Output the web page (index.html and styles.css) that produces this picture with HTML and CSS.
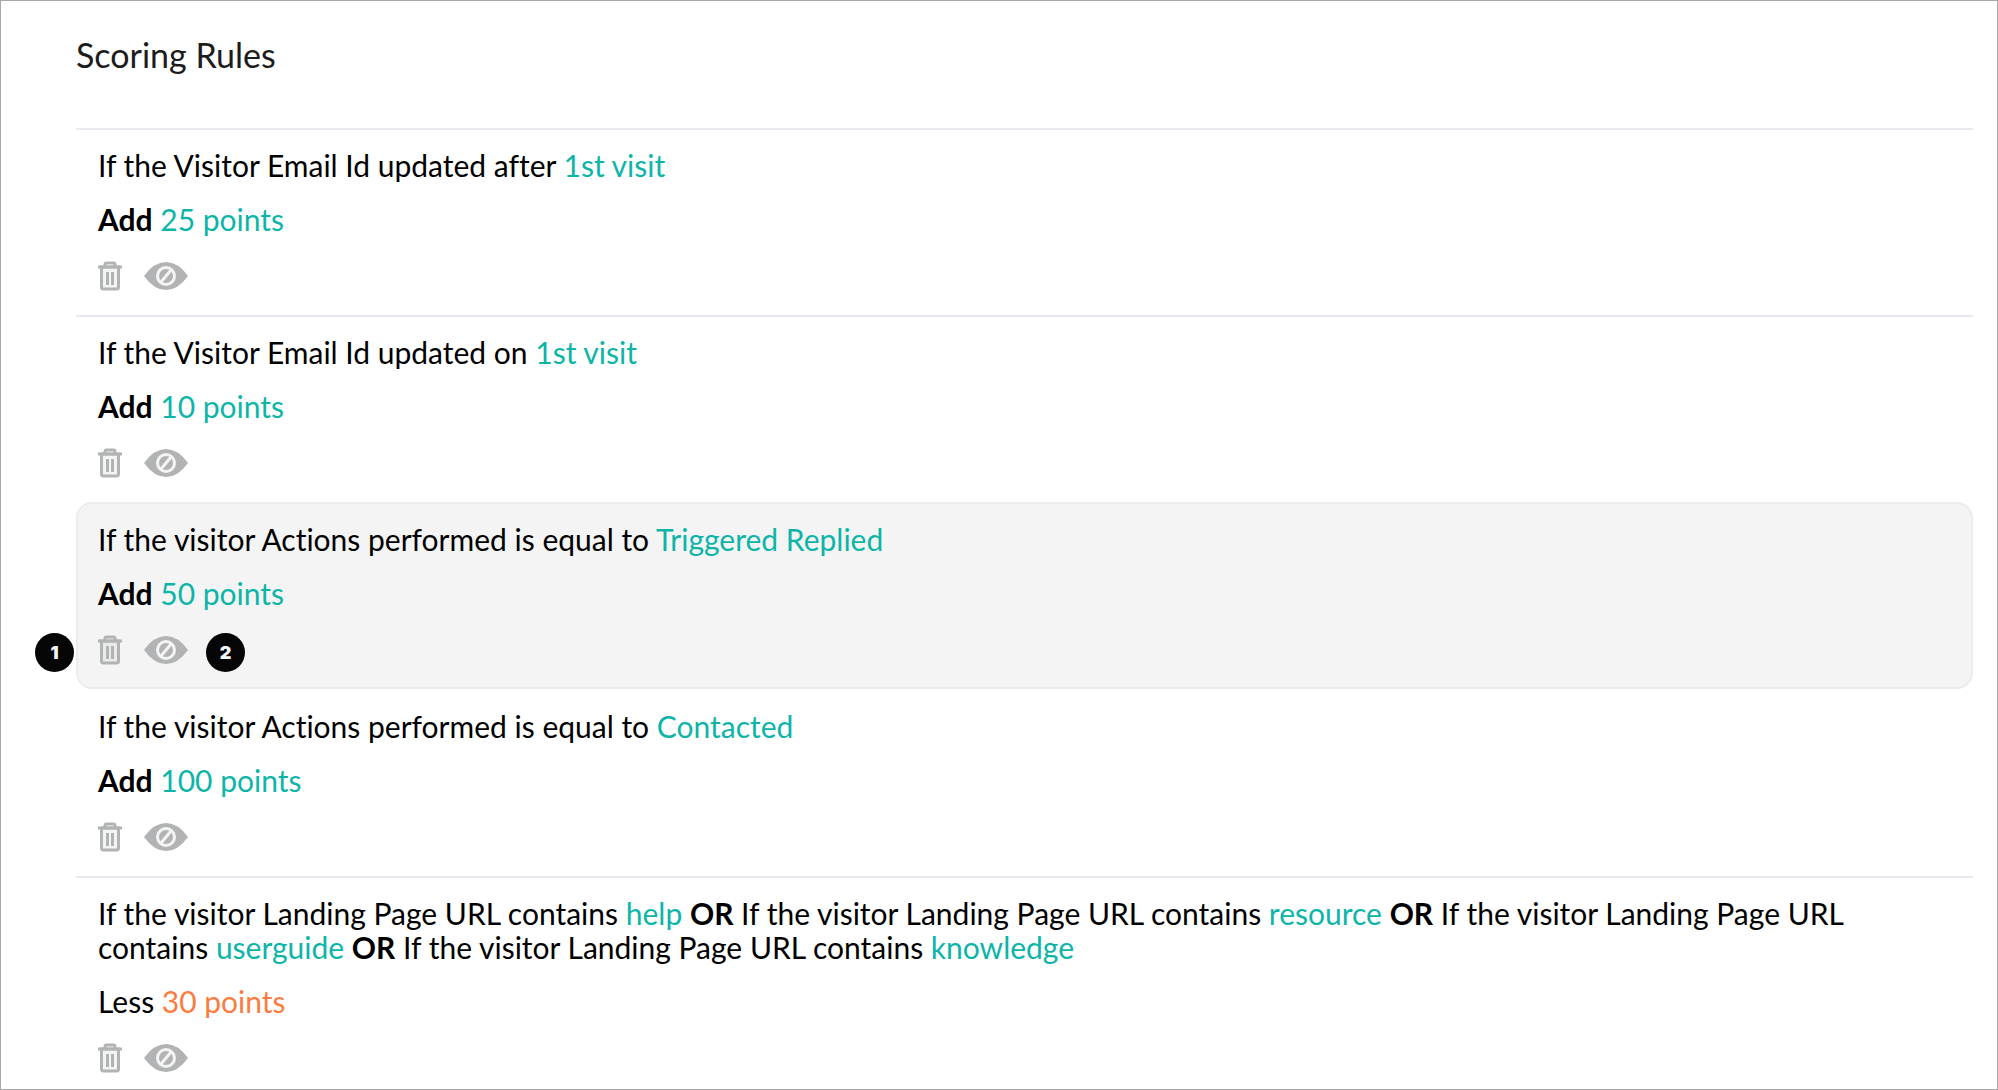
FILE: index.html
```html
<!DOCTYPE html>
<html lang="en">

<head>
	<title>Scoring Rules</title>
	<meta charset="utf-8">
	<meta name="viewport" content="width=device-width, initial-scale=1.0">
	<link rel="stylesheet" href="styles.css">
</head>

<body>
	<svg class="sprite" aria-hidden="true">
		<symbol id="trash" viewBox="0 0 24 30">
			<path d="M3.500 6v20q0 2 2 2h13q2 0 2-2V6z" fill="currentColor" fill-opacity=".15" stroke="currentColor" stroke-width="3" />
			<path d="M0 6h24M7 6V3.500q0-1.500 1.500-1.500h7Q17 2 17 3.500V6" fill="none" stroke="currentColor" stroke-width="3" />
			<path d="M9.500 11v13M14.500 11v13" stroke="currentColor" stroke-width="3" />
		</symbol>
		<symbol id="hide" viewBox="0 0 44 28">
			<path d="M0 14Q10 0 22 0T44 14Q34 28 22 28T0 14z" fill="currentColor" />
			<circle class="ring" cx="22" cy="14" r="8.500" />
			<path class="ring" d="M17 20L27 8" />
		</symbol>
	</svg>

	<main class="page">
		<h1>Scoring Rules</h1>

		<ul class="rules">
			<li class="rule">
				<p>If the Visitor Email Id updated after <span class="value">1st visit</span></p>
				<p><strong>Add</strong> <span class="value">25 points</span></p>
				<div class="actions">
					<button type="button" aria-label="Delete"><svg class="trash"><use href="#trash" /></svg></button>
					<button type="button" aria-label="Disable"><svg class="hide"><use href="#hide" /></svg></button>
				</div>
			</li>
			<li class="rule">
				<p>If the Visitor Email Id updated on <span class="value">1st visit</span></p>
				<p><strong>Add</strong> <span class="value">10 points</span></p>
				<div class="actions">
					<button type="button" aria-label="Delete"><svg class="trash"><use href="#trash" /></svg></button>
					<button type="button" aria-label="Disable"><svg class="hide"><use href="#hide" /></svg></button>
				</div>
			</li>
			<li class="rule selected">
				<p>If the visitor Actions performed is equal to <span class="value">Triggered Replied</span></p>
				<p><strong>Add</strong> <span class="value">50 points</span></p>
				<div class="actions">
					<button type="button" aria-label="Delete"><svg class="trash"><use href="#trash" /></svg></button>
					<button type="button" aria-label="Disable"><svg class="hide"><use href="#hide" /></svg></button>
					<span class="badge first">1</span>
					<span class="badge second">2</span>
				</div>
			</li>
			<li class="rule">
				<p>If the visitor Actions performed is equal to <span class="value">Contacted</span></p>
				<p><strong>Add</strong> <span class="value">100 points</span></p>
				<div class="actions">
					<button type="button" aria-label="Delete"><svg class="trash"><use href="#trash" /></svg></button>
					<button type="button" aria-label="Disable"><svg class="hide"><use href="#hide" /></svg></button>
				</div>
			</li>
			<li class="rule">
				<p>If the visitor Landing Page URL contains <span class="value">help</span> <strong>OR</strong> If the visitor Landing Page URL contains <span class="value">resource</span> <strong>OR</strong> If the visitor Landing Page URL contains <span class="value">userguide</span> <strong>OR</strong> If the visitor Landing Page URL contains <span class="value">knowledge</span></p>
				<p>Less <span class="value less">30 points</span></p>
				<div class="actions">
					<button type="button" aria-label="Delete"><svg class="trash"><use href="#trash" /></svg></button>
					<button type="button" aria-label="Disable"><svg class="hide"><use href="#hide" /></svg></button>
				</div>
			</li>
		</ul>
	</main>
</body>

</html>
```
FILE: styles.css
```css
* {
	box-sizing: border-box;
}

body {
	margin: 0;
	background-color: white;
	color: black;
	font-family: Lato, sans-serif;
	font-size: 30px;
	font-variant-ligatures: none;
	line-height: 34px;
}

.sprite {
	display: none;
}

.page {
	min-height: 100vh;
	padding: 34px 24px 0 75px;
	border: 1px solid #a8a8a8;
}

h1 {
	margin: 0 0 53px;
	font-size: 34px;
	font-weight: 400;
	line-height: 40px;
	color: #1c1c1c;
}

.rules {
	margin: 0;
	padding: 0;
	list-style: none;
}

.rule {
	display: flex;
	flex-direction: column;
	gap: 20px;
	padding: 18px 22px 20px;
	border-top: 2px solid #e9eaef;
}

.rule:last-child {
	padding-bottom: 0;
}

.rule p {
	margin: 0;
}

.value {
	color: #0db5a8;
}

.less {
	color: #fa7c3f;
}

.selected {
	padding: 18px 20px;
	border: 2px solid #ececec;
	border-radius: 16px;
	background-color: #f4f4f4;
}

.selected + .rule {
	border-color: transparent;
}

.actions {
	display: flex;
	align-items: center;
	gap: 22px;
	height: 39px;
	position: relative;
}

.actions button {
	display: flex;
	padding: 0;
	border: none;
	background: none;
	color: #b1b3b4;
	cursor: pointer;
}

.trash {
	width: 24px;
	height: 30px;
}

.hide {
	width: 44px;
	height: 28px;
}

.ring {
	fill: none;
	stroke: #f4f4f4;
	stroke-width: 3;
}

/* numbered markers over the buttons */
.badge {
	position: absolute;
	top: 3px;
	width: 39px;
	height: 39px;
	border-radius: 50%;
	background-color: #060606;
	color: #f4f6fc;
	font-family: Inter, sans-serif;
	font-size: 18px;
	font-weight: 900;
	line-height: 39px;
	text-align: center;
}

.first {
	left: -63px;
}

.second {
	left: 108px;
}
```
